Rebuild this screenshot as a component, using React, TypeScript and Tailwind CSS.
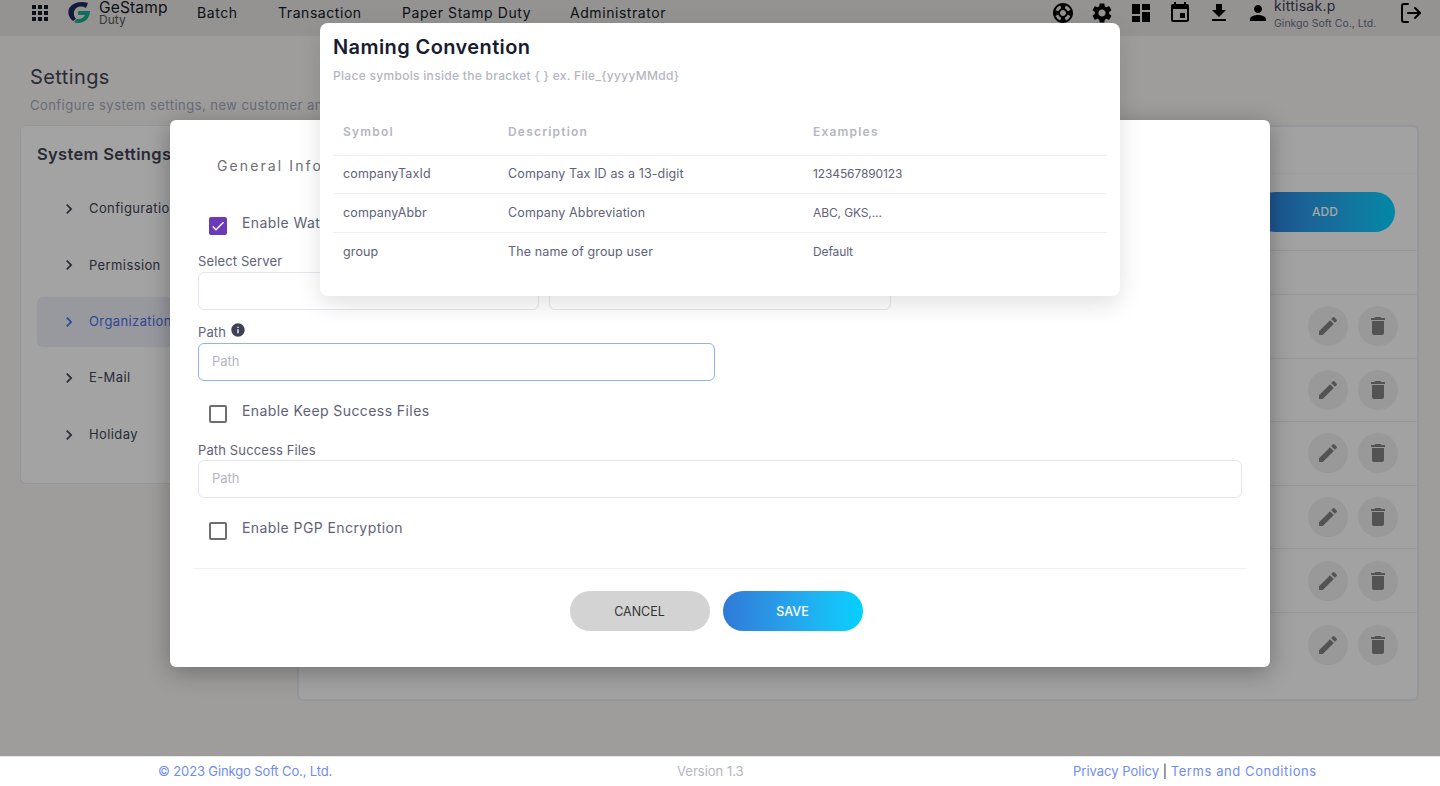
import React from "react";
import {
  MdApps,
  MdOutlineSupport,
  MdSettings,
  MdDashboard,
  MdEvent,
  MdFileDownload,
  MdPerson,
  MdEdit,
  MdDelete,
  MdInfo,
  MdChevronRight,
  MdCheck,
} from "react-icons/md";
import { LuLogOut } from "react-icons/lu";

const navItems = [
  { label: "Batch", cls: "w-[81px]" },
  { label: "Transaction", cls: "w-[124px]" },
  { label: "Paper Stamp Duty", cls: "w-[168px]" },
  { label: "Administrator", cls: "w-[110px]" },
];

const sideItems = ["Configuration", "Permission", "Organization", "E-Mail", "Holiday"];

const symbols = [
  { symbol: "companyTaxId", description: "Company Tax ID as a 13-digit", example: "1234567890123", cls: "h-[38px]", pad: "" },
  { symbol: "companyAbbr", description: "Company Abbreviation", example: "ABC, GKS,...", cls: "h-[39px]", pad: "pt-[2px]" },
  { symbol: "group", description: "The name of group user", example: "Default", cls: "h-[39px]", pad: "pt-[2px]" },
];

const Logo = () => (
  <svg width="24" height="24" viewBox="0 0 24 24" className="mb-[1px] shrink-0">
    <path d="M21 2 L19 7 C14 4 8 6 7 11 C6.5 14 7.5 16 9 18 L6 20 C1 16 0 10 3 6 C7 1 15 0 21 2 Z" fill="#1c2a5e" />
    <path d="M11 10 H23 C23 17 18 22 11 22 C9.5 22 8 21.5 7 21 L10 18 C14 18.5 17 16.5 18 14 H11 Z" fill="#1aa98c" />
  </svg>
);

const Header = () => (
  <header className="flex h-9 shrink-0 items-center bg-[#e3e2e0] pb-[10px] text-[#111827]">
    <MdApps className="ml-[28px] text-[24px]" />
    <div className="ml-[15px] flex items-center">
      <Logo />
      <div className="ml-[8px] flex w-[98px] flex-col">
        <span className="text-[15.5px] leading-[13px] tracking-[0.01em]">GeStamp</span>
        <span className="text-[12px] leading-[12px] text-[#555]">Duty</span>
      </div>
    </div>
    <nav className="-mt-[2px] flex text-[14px] tracking-[0.04em]">
      {navItems.map((item) => (
        <span key={item.label} className={item.cls}>
          {item.label}
        </span>
      ))}
    </nav>
    <div className="ml-[371px] flex items-center gap-[15px] text-[24px] text-black">
      <MdOutlineSupport />
      <MdSettings />
      <MdDashboard />
      <MdEvent />
      <MdFileDownload />
      <MdPerson />
    </div>
    <div className="ml-[4px] flex w-[125px] flex-col self-start">
      <span className="text-[14px] leading-[12px] tracking-[0.02em] text-[#3b3b55]">kittisak.p</span>
      <span className="mt-[6px] text-[10.5px] leading-[12px] text-[#6b6b8a]">Ginkgo Soft Co., Ltd.</span>
    </div>
    <LuLogOut className="text-[24px] text-black" />
  </header>
);

const Sidebar = () => (
  <aside className="h-[359px] w-[260px] shrink-0 rounded-md border border-[#e4e6ef] bg-[#fafafa] px-4 pt-[16px]">
    <h3 className="text-[16.5px] font-semibold leading-[24px] tracking-[0.02em] text-[#3f4254]">System Settings</h3>
    <ul className="mt-[18px] flex flex-col gap-[6.4px]">
      {sideItems.map((item) => (
        <li
          key={item}
          className={
            item === "Organization"
              ? "flex h-[50px] items-center rounded-md bg-[#e9ecf5] pl-[22px] text-[#4a6ee0]"
              : "flex h-[50px] items-center pl-[22px] text-[#3f4254]"
          }
        >
          <MdChevronRight className="text-[20px]" />
          <span className="ml-[10px] text-[13px] tracking-[0.03em]">{item}</span>
        </li>
      ))}
    </ul>
  </aside>
);

const ContentCard = () => (
  <section className="h-[576px] flex-1 rounded-md border-2 border-[#e4e6ef] bg-[#f9f9f9]">
    <div className="h-[47px] border-b border-[#f3f3f3]" />
    <div className="flex h-[77px] items-center justify-end border-b border-[#e9e9ec] pr-[22px]">
      <button className="mb-[1px] h-10 w-[140px] rounded-full bg-gradient-to-r from-[#3079d8] to-[#00d1ff] pt-[1px] text-[12px] font-medium text-white">
        ADD
      </button>
    </div>
    <div className="h-[44px] border-b border-[#e9e9ec]" />
    {[0, 1, 2, 3, 4, 5].map((row) => (
      <div key={row} className="flex h-[63.6px] items-center justify-end gap-[10px] border-b border-[#e9e9ec] pr-[19px] last:border-b-0">
        <span className="flex size-10 items-center justify-center rounded-full bg-[#ebebeb] text-[24px]">
          <MdEdit className="text-[#808080]" />
        </span>
        <span className="flex size-10 items-center justify-center rounded-full bg-[#ebebeb] text-[24px]">
          <MdDelete className="text-[#808080]" />
        </span>
      </div>
    ))}
  </section>
);

const Check = ({ checked, label }: { checked?: boolean; label: string }) => (
  <div className="flex items-start pl-[11px]">
    <span
      className={
        checked
          ? "mt-[2px] flex size-[18px] items-center justify-center rounded-[2px] bg-[#6a3ab8] text-white"
          : "mt-[2px] size-[18px] rounded-[2px] border-2 border-[#6e6e6e] bg-white"
      }
    >
      {checked && <MdCheck className="text-[16px]" />}
    </span>
    <span className="ml-[15px] mt-[1px] text-[14px] leading-[14px] tracking-[0.03em] text-[#5e6278]">{label}</span>
  </div>
);

const Field = ({ cls, placeholder, focused }: { cls: string; placeholder?: string; focused?: boolean }) => (
  <div
    className={
      (focused ? "border-[#8fb0fa] " : "border-[#e4e6ef] ") +
      cls +
      " flex h-[38px] items-center rounded-md border bg-white pl-[13px] text-[13px] text-[#b5b5c3]"
    }
  >
    {placeholder}
  </div>
);

const FormModal = () => (
  <div className="absolute left-[170px] top-[120px] h-[547px] w-[1100px] rounded-md bg-white shadow-[0_5px_25px_rgba(0,0,0,0.3)]">
    <div className="px-[28px] pt-[38px]">
      <h4 className="pl-[19px] text-[14px] leading-[16px] tracking-[0.15em] text-[#6e6e78]">General Information</h4>
      <div className="mt-[41px]">
        <Check checked label="Enable Watermark" />
      </div>
      <label className="mt-[19px] block text-[13px] leading-[14px] tracking-[0.01em] text-[#5e6278]">Select Server</label>
      <div className="mt-[4px] flex gap-[10px]">
        <Field cls="w-[341px]" />
        <Field cls="w-[342px]" />
      </div>
      <label className="mt-[12px] flex h-[21px] items-start text-[13px] tracking-[0.01em] text-[#5e6278]">
        <span className="mt-[2px] leading-[16px]">Path</span>
        <MdInfo className="ml-[4px] text-[16px] text-[#3f4254]" />
      </label>
      <Field cls="w-[517px]" placeholder="Path" focused />
      <div className="mt-[22px]">
        <Check label="Enable Keep Success Files" />
      </div>
      <label className="mt-[20px] block text-[13px] leading-[14px] tracking-[0.01em] text-[#5e6278]">Path Success Files</label>
      <div className="mt-[3px]">
        <Field cls="w-[1044px]" placeholder="Path" />
      </div>
      <div className="mt-[22px]">
        <Check label="Enable PGP Encryption" />
      </div>
    </div>
    <div className="mx-[23px] mt-[28px] border-t border-[#eff0f3]" />
    <div className="mt-[22px] flex justify-center gap-[13px] pr-[8px] text-[12.5px]">
      <button className="h-10 w-[140px] rounded-full bg-[#d3d3d3] pt-[3px] text-[#333]">CANCEL</button>
      <button className="h-10 w-[140px] rounded-full bg-gradient-to-r from-[#3079d8] to-[#00d1ff] pt-[3px] font-medium text-white">
        SAVE
      </button>
    </div>
  </div>
);

const NamingModal = () => (
  <div className="absolute left-[320px] top-[23px] h-[273px] w-[800px] rounded-lg bg-white px-[13px] pt-[12px] shadow-[0_8px_24px_rgba(0,0,0,0.12)]">
    <h2 className="text-[20px] font-semibold leading-[24px] tracking-[0.02em] text-[#181c32]">Naming Convention</h2>
    <p className="mt-[9px] text-[12px] font-medium leading-[16px] tracking-[0.025em] text-[#b5b5c3]">
      {"Place symbols inside the bracket { } ex. File_{yyyyMMdd}"}
    </p>
    <table className="mt-[23px] w-full table-fixed text-left text-[12.5px]">
      <thead>
        <tr className="h-[48px] border-b border-[#eff2f5]">
          <th className="w-[175px] pl-[10px] pt-[2px] text-[12px] font-semibold tracking-[0.1em] text-[#b5b5c3]">Symbol</th>
          <th className="w-[305px] pt-[2px] text-[12px] font-semibold tracking-[0.1em] text-[#b5b5c3]">Description</th>
          <th className="pt-[2px] text-[12px] font-semibold tracking-[0.1em] text-[#b5b5c3]">Examples</th>
        </tr>
      </thead>
      <tbody className="text-[#5e6278]">
        {symbols.map((row, i) => (
          <tr key={row.symbol} className={(i < 2 ? "border-b border-[#eff2f5] " : "") + row.cls}>
            <td className={"pl-[10px] tracking-[0.01em] " + row.pad}>{row.symbol}</td>
            <td className={"tracking-[0.01em] " + row.pad}>{row.description}</td>
            <td className="text-[12px] tracking-[-0.01em]">{row.example}</td>
          </tr>
        ))}
      </tbody>
    </table>
  </div>
);

const Footer = () => (
  <footer className="relative flex h-[30px] shrink-0 items-center border-t border-[#e8e8e8] bg-white pl-[158px] text-[13px]">
    <span className="w-[519px] tracking-[-0.01em] text-[#6f8cf0]">© 2023 Ginkgo Soft Co., Ltd.</span>
    <span className="w-[396px] text-[#b5b5c3]">Version 1.3</span>
    <span className="text-[#6f8cf0]">
      Privacy Policy <span className="text-[#3f4254]">|</span>{" "}
      <span className="tracking-[0.045em]">Terms and Conditions</span>
    </span>
  </footer>
);

export default function App() {
  return (
    <div className="relative flex h-[786px] w-[1440px] flex-col overflow-hidden bg-[#f3f2f0] font-[family-name:Inter,sans-serif]">
      <Header />
      <main className="flex-1 pl-[20px] pr-[21px]">
        <div className="pl-[10px] pt-[28px]">
          <h1 className="text-[20px] leading-[26px] tracking-[0.02em] text-[#3f4254]">Settings</h1>
          <p className="mt-[6px] text-[13px] leading-[18px] tracking-[0.035em] text-[#a1a5b7]">
            Configure system settings, new customer and more
          </p>
        </div>
        <div className="mt-[11px] flex gap-[17px]">
          <Sidebar />
          <ContentCard />
        </div>
      </main>
      <Footer />
      <div className="absolute inset-x-0 top-0 h-[756px] bg-black/35" />
      <FormModal />
      <NamingModal />
    </div>
  );
}
